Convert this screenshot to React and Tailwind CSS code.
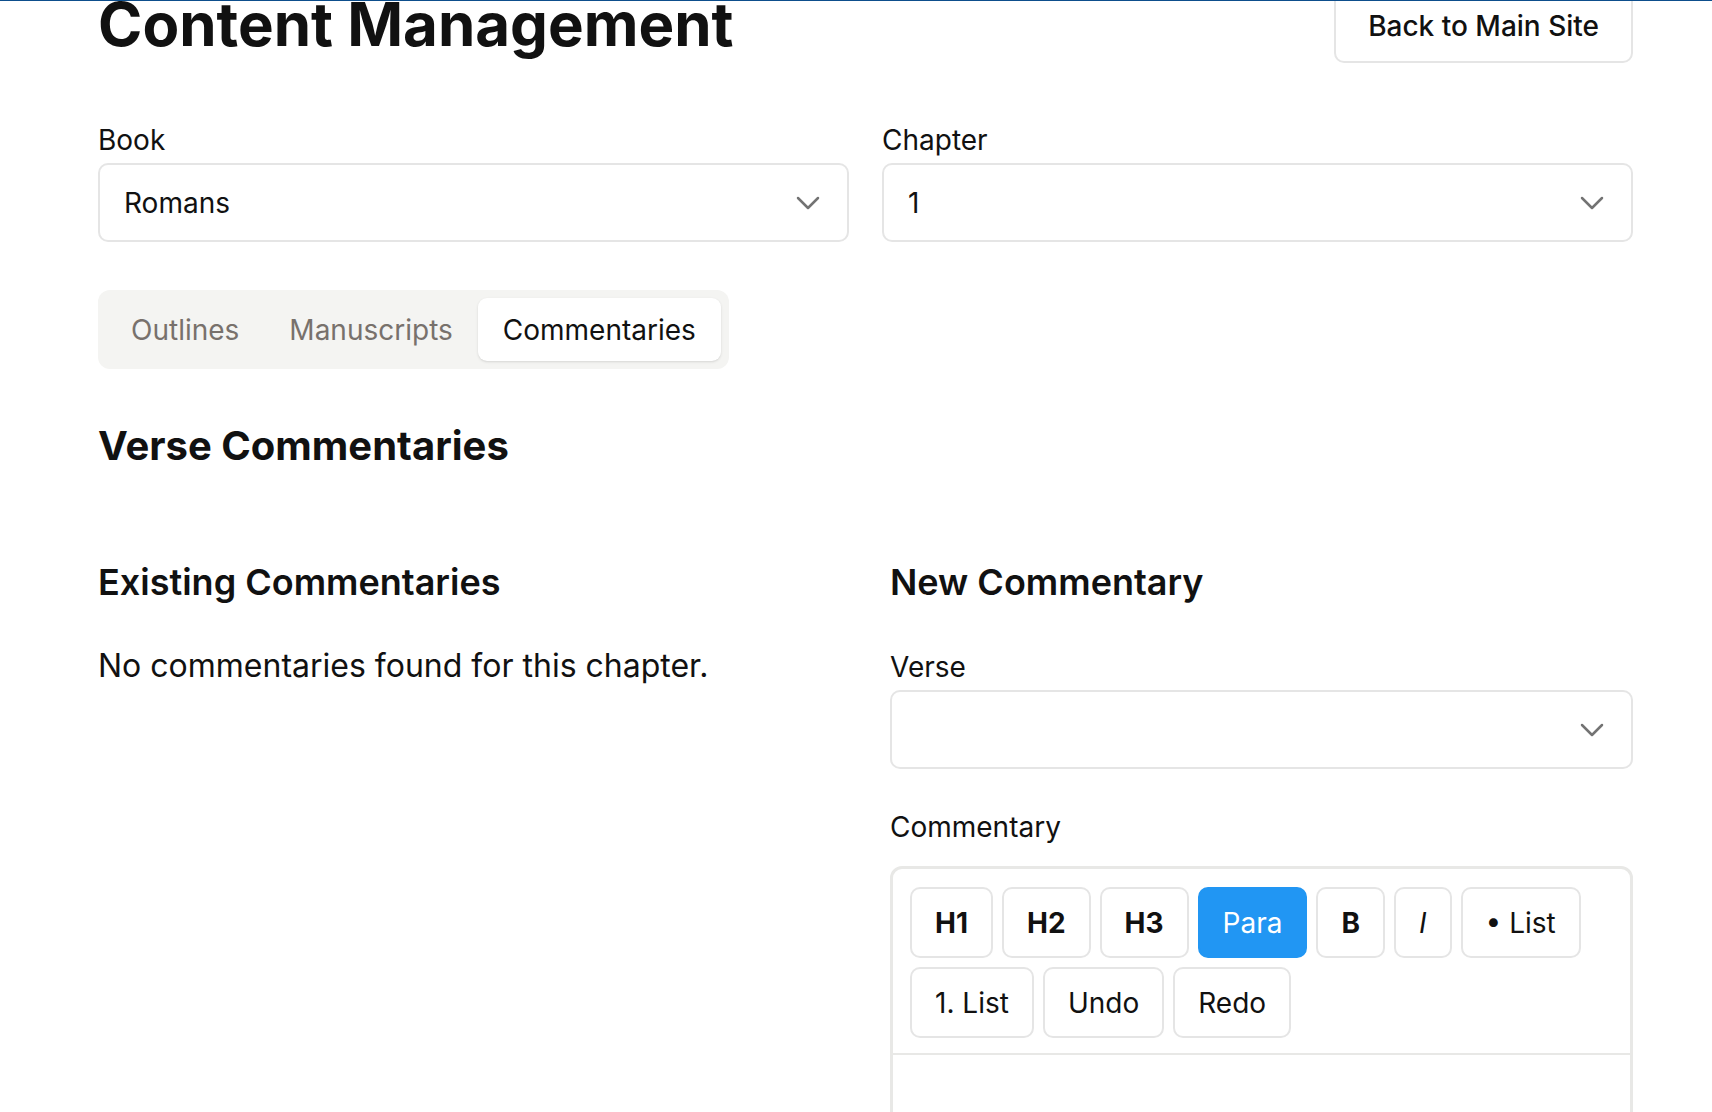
import React from "react";

const Chevron = () => (
  <svg width="40" height="40" viewBox="0 0 24 24" fill="none" stroke="#737373" strokeWidth="1.5" strokeLinecap="round" strokeLinejoin="round">
    <path d="M6 9l6 6 6-6" />
  </svg>
);

const SelectBox = ({ value }) => (
  <div className="flex h-[79px] items-center justify-between rounded-[10px] border-2 border-[#e5e5e5] bg-white pl-[24px] pr-[19px] text-[28px] text-[#111]">
    <span>{value}</span>
    <Chevron />
  </div>
);

const tools = [
  { label: "H1", cls: "font-bold" },
  { label: "H2", cls: "font-bold" },
  { label: "H3", cls: "font-bold" },
  { label: "Para", active: true },
  { label: "B", cls: "font-bold" },
  { label: "I", cls: "italic" },
  { label: "• List" },
  { label: "1. List" },
  { label: "Undo" },
  { label: "Redo" },
];

const App = () => {
  const [tab, setTab] = React.useState("Commentaries");

  return (
    <div className="relative min-h-screen overflow-hidden bg-white font-['Inter',sans-serif] text-[#111]">
      <div className="absolute inset-x-0 top-0 z-10 h-px bg-[#0d4e8c]"></div>
      <div className="-mt-[12px] pl-[98px] pr-[79px]">
        <div className="flex items-start justify-between">
          <h1 className="text-[60px] font-bold leading-[72px]">Content Management</h1>
          <button className="h-[75px] rounded-[10px] border-2 border-[#e5e5e5] px-[32px] text-[28px] font-medium">
            Back to Main Site
          </button>
        </div>

        <div className="mt-[57px] grid grid-cols-2 gap-x-[33px]">
          <div>
            <div className="mb-[3px] text-[28px] leading-[40px]">Book</div>
            <SelectBox value="Romans" />
          </div>
          <div>
            <div className="mb-[3px] text-[28px] leading-[40px]">Chapter</div>
            <SelectBox value="1" />
          </div>
        </div>

        <div className="mt-[48px] inline-flex h-[79px] items-center rounded-[12px] bg-[#f4f4f2] p-[8px]">
          {["Outlines", "Manuscripts", "Commentaries"].map((t) => (
            <button
              key={t}
              onClick={() => setTab(t)}
              className={`h-full rounded-[9px] px-[25px] text-[28px] ${
                tab === t ? "bg-white text-[#111] shadow-sm" : "text-[#78716c]"
              }`}>
              {t}
            </button>
          ))}
        </div>

        <h2 className="mt-[53px] text-[40px] font-bold leading-[48px]">Verse Commentaries</h2>

        <div className="mt-[90px] grid grid-cols-2 gap-x-[49px]">
          <div>
            <h3 className="text-[36px] font-semibold leading-[44px]">Existing Commentaries</h3>
            <p className="mt-[40px] text-[32px] leading-[44px]">No commentaries found for this chapter.</p>
          </div>
          <div>
            <h3 className="text-[36px] font-semibold leading-[44px]">New Commentary</h3>
            <div className="mt-[43px] mb-[3px] text-[28px] leading-[40px]">Verse</div>
            <SelectBox value="" />

            <div className="mt-[38px] mb-[19px] text-[28px] leading-[40px]">Commentary</div>
            <div className="rounded-[12px] border-[3px] border-[#e8e8e6]">
              <div className="flex flex-wrap gap-[9px] border-b-2 border-[#e8e8e6] px-[17px] pt-[18px] pb-[15px]">
                {tools.map((t) => (
                  <button
                    key={t.label}
                    className={`h-[71px] rounded-[10px] border-2 px-[23px] text-[28px] ${
                      t.active ? "border-[#2196f3] bg-[#2196f3] text-white" : "border-[#e5e5e5] bg-white"
                    } ${t.cls || ""}`}>
                    {t.label}
                  </button>
                ))}
              </div>
              <div className="h-[300px]"></div>
            </div>
          </div>
        </div>
      </div>
    </div>
  );
};

export default App;
